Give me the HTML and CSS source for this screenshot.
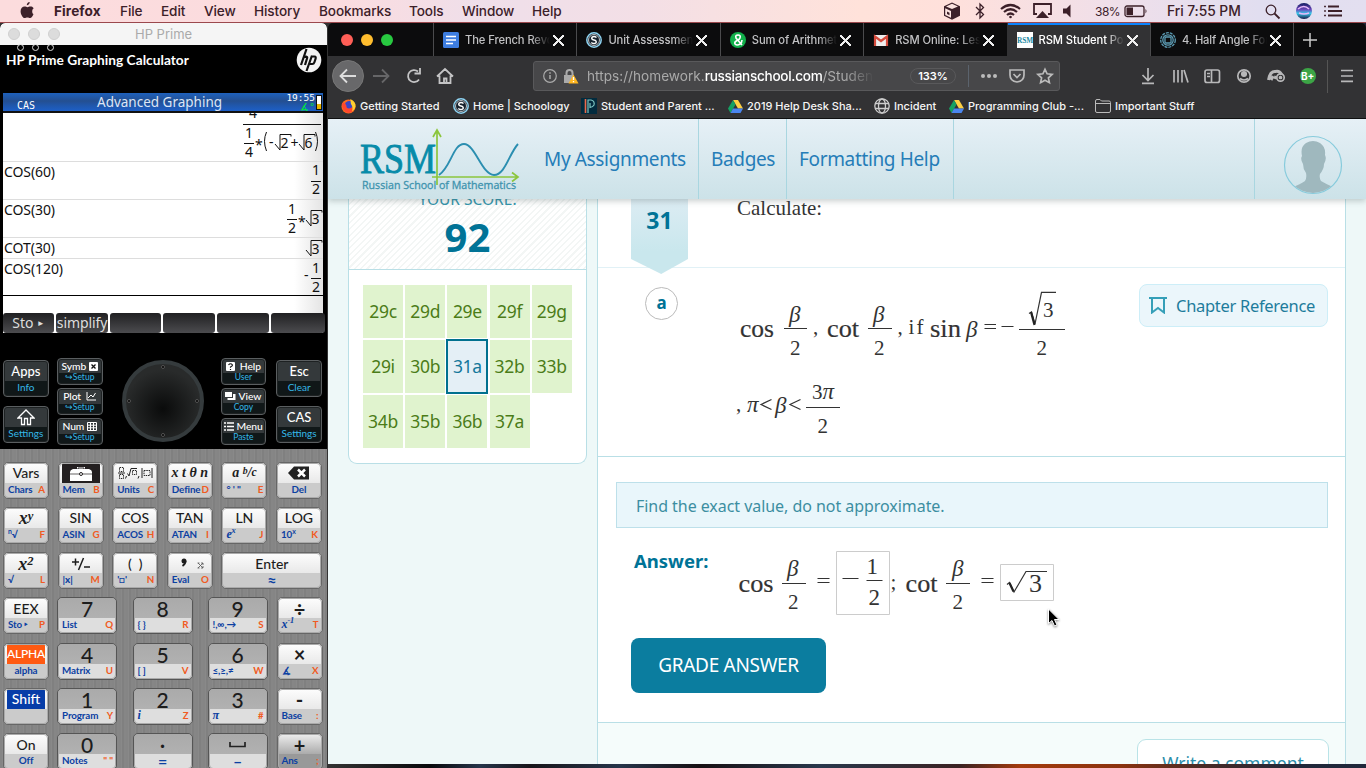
FILE: index.html
```html
<!DOCTYPE html>
<html lang="en">
<head>
<meta charset="utf-8">
<title>RSM Student Portal</title>
<link rel="stylesheet" href="styles.css">
</head>
<body>
<div class="desktop">
<header class="menubar">
  <svg class="apple" width="14" height="17" viewBox="0 0 14 17"><path d="M9.7 0c.1 1.500-1.300 3.300-2.900 3.300C6.600 1.700 8.100.2 9.700 0zM12.200 9.200c0-1.500.8-2.400 1.500-2.900C12.800 5 11.600 4.600 10.500 4.600c-1.300 0-2.300.7-3 .7-.8 0-1.700-.7-2.800-.7C2.400 4.600.6 6.300.6 9.300c0 3.200 2.200 6.800 4 6.800 1 0 1.600-.7 2.800-.7s1.600.7 2.700.7c1.400 0 2.700-2 3.400-4-1-.4-1.300-1.500-1.300-2.900z"/></svg>
  <nav class="menus"><b>Firefox</b><span>File</span><span>Edit</span><span>View</span><span>History</span><span>Bookmarks</span><span>Tools</span><span>Window</span><span>Help</span></nav>
  <svg class="status" width="145" height="22" viewBox="0 0 145 22">
    <path class="ink" d="M9 2.500l8 3.800v9.400l-8 4-8-4V6.300z"/><path fill="#fbe3e0" d="M3 6.500L9 3.800l6 2.700-6 2.600zM2.200 8.300L8 11v6.800l-5.800-2.900z"/><path class="ink" d="M4 11.500l2.500 1.200v2.600L4 14z"/>
    <path class="line" d="M33 7l7.500 7.500L37 18V4l3.500 3.500L33 15"/>
    <path class="arc" d="M58 9q9.500-8 19 0M61 12q6.500-5.500 13 0M64 15q3.500-3 7 0"/><circle class="ink" cx="67.500" cy="17" r="1.300"/>
    <path class="line2" d="M94 14h-3V4h17v10h-3"/><path class="ink" d="M93 18l6.500-7 6.500 7z"/>
    <path class="ink" d="M120 8.500h3.500l4-4v13l-4-4H120z"/>
  </svg>
  <span class="pct">38%</span>
  <svg class="batt" width="24" height="14" viewBox="0 0 24 14"><rect x="1" y="2" width="19" height="10.500" rx="2" class="line"/><rect x="2.500" y="3.500" width="6.500" height="7.500" class="ink"/><path class="ink" d="M21.500 5q2 2.200 0 4.500z"/></svg>
  <span class="clock">Fri 7:55 PM</span>
  <svg class="right-icons" width="90" height="22" viewBox="0 0 90 22"><circle cx="7" cy="10" r="4.800" class="line"/><path class="line2" d="M10.500 13.500l5 5"/><defs><linearGradient id="siri" x2="0" y2="1"><stop offset="0" stop-color="#111c60"/><stop offset=".4" stop-color="#6a45b8"/><stop offset=".65" stop-color="#38c7e8"/><stop offset="1" stop-color="#151848"/></linearGradient></defs><circle cx="40" cy="11" r="8" fill="url(#siri)"/><path d="M34 9q6-5 11 0M35 13q5 2 10 0" stroke="#e7b8fa" fill="none" stroke-width="1.500"/><path class="line2" d="M64 6.500h11M64 11h14M64 15.500h14"/><path class="line2" stroke-dasharray="1.500 3" d="M61 5.700v13"/></svg>
</header>

<section class="calc">
  <div class="calc-title"><i></i><i></i><i></i><span>HP Prime</span></div>
  <div class="brand"><div class="ghost"><i></i><i></i><i></i></div><span>HP Prime Graphing Calculator</span>
    <svg width="26" height="26" viewBox="0 0 26 26"><circle cx="13" cy="13" r="12.300" fill="#f3f3f3"/><g fill="none" stroke="#111" stroke-width="2.200"><path d="M10.500 2L5 18M7.500 10.500q4.500-2 3.500 1L9 18M16 8.500L10.500 24M15.500 9.500h3q1.800 0 1 2.500l-1.200 3.500q-.5 1.500-2 1.500h-2.500"/></g></svg>
  </div>
  <div class="lcd">
    <div class="lcd-head"><span class="cas">CAS</span><span class="app">Advanced Graphing</span><div class="lcd-stat"><span>19:55</span><em>∡°</em></div><i class="cell"></i></div>
    <svg class="lcd-body" width="320" height="200" viewBox="3 113 320 200">
      <path d="M3 161.500h320M3 199.500h320M3 237.500h320M3 258.500h320" stroke="#ddd"/>
      <path d="M3 295.500h320" stroke="#000"/>
      <text x="249" y="118">4</text><path d="M243 124.500h78" class="ln"/>
      <text x="245" y="137.500">1</text><path d="M244 143.500h10" class="ln"/><text x="245" y="156.500">4</text>
      <text x="255" y="150">*</text><path class="ln" d="M266.500 132q-4 9 0 19M315.500 132q4 9 0 19"/><text x="269" y="147">-</text>
      <path class="rad" d="M275 144l5 6v-15.500h11v2M299 144l5 6v-15.500h11v2"/><text x="280.500" y="148">2</text><text x="290.500" y="147.500">+</text><text x="304.500" y="148">6</text>
      <text x="4" y="177" textLength="51">COS(60)</text><text x="4" y="215" textLength="51">COS(30)</text><text x="4" y="253" textLength="51">COT(30)</text><text x="4" y="274" textLength="59">COS(120)</text>
      <text x="312" y="175">1</text><path d="M311 181.500h10" class="ln"/><text x="312" y="194">2</text>
      <text x="288" y="214">1</text><path d="M287 219.500h10" class="ln"/><text x="288" y="233">2</text><text x="298" y="227">*</text><path class="rad" d="M306 220l5 6v-15.500h11v2M306 250l5 6v-15.500h11v2"/><text x="311.500" y="224">3</text><text x="311.500" y="254">3</text>
      <text x="304" y="280">-</text><text x="312" y="273">1</text><path d="M311 278.500h10" class="ln"/><text x="312" y="292">2</text>
    </svg>
    <div class="soft"><span>Sto <small>►</small></span><span>simplify</span><span></span><span></span><span></span><span></span></div>
  </div>
  <div class="nav-keys">
    <div class="col big"><div class="dk"><b>Apps</b><u>Info</u></div><div class="dk"><b><svg width="18" height="17" viewBox="0 0 18 17"><path d="M1 9l8-8 8 8h-3.500v6.500h-3V9.500h-3v6h-3V9z" fill="none" stroke="#fff" stroke-width="1.300"/></svg></b><u>Settings</u></div></div>
    <div class="col small"><div class="dk"><b>Symb <svg width="9" height="9" viewBox="0 0 9 9"><rect width="9" height="9" rx="1" fill="#fff"/><path d="M2.500 2.500l4 4m0-4l-4 4" stroke="#111" stroke-width="1.300"/></svg></b><u>↪Setup</u></div><div class="dk"><b>Plot &nbsp;<svg width="10" height="9" viewBox="0 0 10 9"><path d="M1 0v8h9M2 6l3-3 2 2 2.500-4" fill="none" stroke="#fff"/></svg></b><u>↪Setup</u></div><div class="dk"><b>Num <svg width="10" height="9" viewBox="0 0 10 9"><path d="M.5.500h9v8h-9zM.5 3.200h9M.5 5.800h9M3.500.5v8M6.500.5v8" fill="none" stroke="#fff"/></svg></b><u>↪Setup</u></div></div>
    <svg class="pad" width="84" height="84" viewBox="0 0 84 84"><defs><radialGradient id="pd" cy=".6"><stop offset="0" stop-color="#0a0b0b"/><stop offset="1" stop-color="#292b2b"/></radialGradient></defs><circle cx="42" cy="42" r="39" fill="url(#pd)" stroke="#353b3d" stroke-width="4"/><g fill="#000" stroke="#555"><circle cx="42" cy="8" r="1.500"/><circle cx="42" cy="76" r="1.500"/><circle cx="8" cy="42" r="1.500"/><circle cx="76" cy="42" r="1.500"/></g></svg>
    <div class="col small"><div class="dk"><b><svg width="9" height="9" viewBox="0 0 9 9"><rect width="9" height="9" rx="1" fill="#fff"/><path d="M2.500 3q2-2.500 4 0 0 1-2 2v.8M4.500 7v1" fill="none" stroke="#111" stroke-width="1.200"/></svg>&nbsp; Help</b><u>User</u></div><div class="dk"><b><svg width="11" height="9" viewBox="0 0 11 9"><path d="M0 0h7v5H0zM2.500 6H8V2h2.500v6h-8z" fill="#fff"/></svg> View</b><u>Copy</u></div><div class="dk"><b><svg width="10" height="9" viewBox="0 0 10 9"><path d="M0 1h2m1 0h7M0 4.500h2m1 0h7M0 8h2m1 0h7" stroke="#fff" stroke-width="1.500"/></svg> Menu</b><u>Paste</u></div></div>
    <div class="col big"><div class="dk"><b>Esc</b><u>Clear</u></div><div class="dk"><b>CAS</b><u>Settings</u></div></div>
  </div>
  <div class="keypad">
    <div class="row six">
      <div class="key"><b>Vars</b><u>Chars<em>A</em></u></div>
      <div class="key mem"><b><svg width="42" height="16" viewBox="0 0 42 16"><path d="M10 16V7q0-2 3-3h4V2h8v2h4q3 1 3 3v9z" fill="#fff"/><path d="M10 9h22" stroke="#231f20" stroke-width=".7"/><path d="M18 4V3h6v1" stroke="#231f20" fill="none"/><circle cx="21" cy="9" r="1.500" stroke="#231f20" fill="#fff"/></svg></b><u>Mem<em>B</em></u></div>
      <div class="key"><b><svg width="36" height="14" viewBox="0 0 36 14"><g fill="none" stroke="#222" stroke-width="1"><path d="M2.500 1.500h4v4h-4zM2.500 8.500h4v4h-4z" stroke-dasharray="1.500 .8"/><path d="M1 7h7M9.500 10l-1 2.500M10.500 7.500l1.500 2.500 2-7.500h6M22 10l-1 2.500M25 2v10M35 2v10"/><path d="M15.500 4.500h4v4h-4zM27 4.500h6v5h-6z" stroke-dasharray="1.500 .8"/></g></svg></b><u>Units<em>C</em></u></div>
      <div class="key"><b class="var">x t θ n</b><u>Define<em>D</em></u></div>
      <div class="key"><b class="var">a <sup>b</sup>/<small>c</small></b><u class="deg">° ' "<em>E</em></u></div>
      <div class="key"><b><svg width="22" height="14" viewBox="0 0 22 14"><path d="M0 7l6-6.500h15v13H6z" fill="#222"/><path d="M10 3.500l7 7m0-7l-7 7" stroke="#fff" stroke-width="2.500"/></svg></b><u class="mid">Del</u></div>
    </div>
    <div class="row six">
      <div class="key"><b class="var xl">x<sup>y</sup></b><u><sup>n</sup>√<em>F</em></u></div><div class="key"><b>SIN</b><u>ASIN<em>G</em></u></div><div class="key"><b>COS</b><u>ACOS<em>H</em></u></div><div class="key"><b>TAN</b><u>ATAN<em>I</em></u></div><div class="key"><b>LN</b><u class="it">e<sup>x</sup><em>J</em></u></div><div class="key"><b>LOG</b><u>10<sup>x</sup><em>K</em></u></div>
    </div>
    <div class="row enter">
      <div class="key"><b class="var xl">x<sup>2</sup></b><u>√<em>L</em></u></div><div class="key"><b><svg width="20" height="14" viewBox="0 0 20 14"><path d="M1 5h7M4.500 1.500v7M12.500 1l-5 12M13 10h6" fill="none" stroke="#1d1d1d" stroke-width="1.500"/></svg></b><u>|<strong>x</strong>|<em>M</em></u></div><div class="key"><b>(&nbsp; )</b><u>'□'<em>N</em></u></div><div class="key"><b class="comma"><svg width="30" height="14" viewBox="0 0 30 14"><circle cx="9" cy="4" r="2.500" fill="#1d1d1d"/><path d="M10.500 4q0 3-3 5" fill="none" stroke="#1d1d1d" stroke-width="1.800"/><path d="M23 6l5 5m0-5l-5 5m3-5h2v2m0 1v2h-2M22.500 6h2M22.500 11h2" fill="none" stroke="#555" stroke-width=".8"/></svg></b><u>Eval<em>O</em></u></div><div class="key"><b>Enter</b><u class="mid approx">≈</u></div>
    </div>
    <div class="row five"><div class="key"><b>EEX</b><u>Sto ‣<em>P</em></u></div><div class="key num"><b>7</b><u>List<em>Q</em></u></div><div class="key num"><b>8</b><u>{ }<em>R</em></u></div><div class="key num"><b>9</b><u>!,∞,→<em>S</em></u></div><div class="key"><b class="op">÷</b><u class="it">x<sup>-1</sup><em>T</em></u></div></div>
    <div class="row five"><div class="key alpha"><b>ALPHA</b><u class="mid">alpha</u></div><div class="key num"><b>4</b><u>Matrix<em>U</em></u></div><div class="key num"><b>5</b><u>[ ]<em>V</em></u></div><div class="key num"><b>6</b><u>≤,≥,≠<em>W</em></u></div><div class="key"><b class="op">×</b><u>∡<em>X</em></u></div></div>
    <div class="row five"><div class="key shift"><b>Shift</b><u></u></div><div class="key num"><b>1</b><u>Program<em>Y</em></u></div><div class="key num"><b>2</b><u class="it">i<em>Z</em></u></div><div class="key num"><b>3</b><u class="it">π<em>#</em></u></div><div class="key"><b class="op">-</b><u>Base<em>:</em></u></div></div>
    <div class="row five"><div class="key"><b>On</b><u class="mid">Off</u></div><div class="key num"><b>0</b><u>Notes<em>" "</em></u></div><div class="key num"><b>·</b><u class="mid approx">=</u></div><div class="key num"><b><svg width="17" height="6" viewBox="0 0 17 6"><path d="M1 0v4.500h15V0" fill="none" stroke="#222" stroke-width="1.700"/></svg></b><u class="mid approx">–</u></div><div class="key plus"><b class="op">+</b><u>Ans<em>;</em></u></div></div>
  </div>
</section>

<section class="browser">
  <div class="tabs">
    <div class="lights"><i></i><i></i><i></i></div>
    <div class="tab"><svg width="16" height="16" viewBox="0 0 16 16"><rect width="16" height="16" rx="1.500" fill="#3d7de0"/><path d="M3 4.500h10M3 8h10M3 11.500h7" stroke="#fff" stroke-width="1.700"/></svg><span>The French Revolution</span><s></s></div>
    <div class="tab"><svg width="16" height="16" viewBox="0 0 16 16"><circle cx="8" cy="8" r="7.200" fill="#17222d" stroke="#8fd3f1" stroke-width="1.500"/><circle cx="8" cy="8" r="5.500" fill="none" stroke="#fff" stroke-width=".7"/><path d="M10.500 5.500Q8 3.500 6 5.300q-1 2 2 2.700 3 .8 2 2.700-2 1.800-4.700-.2" fill="none" stroke="#fff" stroke-width="1.500"/></svg><span>Unit Assessment - Gr</span><s></s></div>
    <div class="tab"><svg width="16" height="16" viewBox="0 0 16 16"><circle cx="8" cy="8" r="8" fill="#12b04b"/><path d="M12 13L6 6q-1-3 2-3t2 3q-.5 1.500-3 2.500-3 1.500-2 3.500 2 2 5 0 2-1.500 2-4" fill="none" stroke="#fff" stroke-width="1.600"/></svg><span>Sum of Arithmetic Seq</span><s></s></div>
    <div class="tab"><svg width="16" height="16" viewBox="0 0 16 16"><path d="M1 3h14v11H1z" fill="#eee"/><path d="M2 14V4.500L8 9l6-4.500V14" fill="none" stroke="#d54b3d" stroke-width="2.200"/></svg><span>RSM Online: Lesson 2</span><s></s></div>
    <div class="tab active"><svg width="16" height="16" viewBox="0 0 16 16"><rect width="16" height="16" fill="#fff"/><text x="0" y="11" textLength="16" lengthAdjust="spacingAndGlyphs" font-family="Liberation Serif" font-size="8.500" font-weight="bold" fill="#2089a3">RSM</text></svg><span>RSM Student Portal</span><s></s></div>
    <div class="tab"><svg width="16" height="16" viewBox="0 0 16 16" fill="none" stroke="#5b9ab2" stroke-width="1.300"><circle cx="8" cy="8" r="7.300" stroke-dasharray="3 1"/><circle cx="8" cy="8" r="5.200"/><rect x="5" y="5" width="6" height="6" rx="1"/></svg><span>4. Half Angle Formulas</span><s></s></div>
    <div class="newtab"><svg width="14" height="14" viewBox="0 0 14 14"><path d="M7 0v14M0 7h14" stroke="#ccc" stroke-width="1.500"/></svg></div>
  </div>
  <div class="toolbar">
    <svg class="nav-ic" width="130" height="34" viewBox="0 0 130 34" fill="none" stroke="#c4c4c5" stroke-width="1.800"><circle cx="17" cy="17" r="15.500" fill="#68686a" stroke="#777" stroke-width="1"/><path d="M25 17H10M16 10.500L9.500 17l6.500 6.500" stroke="#ddd"/><path d="M42 17h15M51 10.500l6.500 6.500-6.500 6.500" stroke="#666668"/><path d="M88 20.500a6 6 0 1 1-1-8M89 9v5.500h-5.500" /><path d="M106 17.500l8-7.500 8 7.500M108.500 16.500v7.500h11v-7.500M113 24v-4.500h2.500V24"/></svg>
    <div class="url">
      <svg width="38" height="20" viewBox="0 0 38 20"><circle cx="9" cy="10" r="6.300" fill="none" stroke="#aaa" stroke-width="1.200"/><path d="M9 9v4M9 6.300v1.500" stroke="#aaa" stroke-width="1.500"/><path d="M25.500 10V7q0-3 3-3t3 3v3" fill="none" stroke="#aaa" stroke-width="2"/><path fill="#aaa" d="M23 9h10v8H23z"/><path d="M32.500 8.500l5 9h-10z" fill="#ffb61e"/><path d="M32.500 11v3m0 1v1.300" stroke="#fff" stroke-width="1.300"/></svg>
      <span class="addr">https://homework.<b>russianschool.com</b>/Student/</span><span class="zoom">133%</span><hr>
      <svg width="75" height="20" viewBox="0 0 75 20" fill="none" stroke="#bbb" stroke-width="1.700"><g fill="#bbb" stroke="none"><circle cx="3" cy="10" r="2"/><circle cx="9" cy="10" r="2"/><circle cx="15" cy="10" r="2"/></g><path d="M30 4h14v5q0 6-7 7-7-1-7-7z"/><path d="M33.500 8l3.500 3.500L40.500 8"/><path d="M65 3.300l2.100 4.500 5 .6-3.700 3.400 1 4.900-4.400-2.500-4.400 2.500 1-4.900-3.700-3.400 5-.6z"/></svg>
    </div>
    <svg class="tools" width="225" height="34" viewBox="0 0 225 34" fill="none" stroke="#b8b8b9" stroke-width="1.700"><path d="M16 9v12M10.500 16l5.500 5.500 5.500-5.500M10 24.300h12"/><path d="M42 11v12.500M46 11v12.500M50 11v12.500M52 11l4 12.500" /><rect x="73" y="11" width="14.500" height="12.500" rx="2"/><path d="M79.500 11v12.500M75 14.500h3M75 17.500h3"/><circle cx="112" cy="17" r="6.200"/><circle cx="112" cy="15" r="2.200" fill="#b8b8b9"/><path d="M108 19.500q4 3 8 0"/><path d="M136.500 21l1-4q2-5 6-4.500 4-1 6 3M139 21l2-4M143 20l1-3" stroke-width="3"/><circle cx="148.500" cy="18.500" r="3.700"/><circle cx="148.500" cy="18.500" r="1" fill="#b8b8b9"/><circle cx="176" cy="17" r="8" fill="#3ca546" stroke="none"/><text x="169" y="20.500" fill="#fff" stroke="none" font-family="Inter" font-weight="bold" font-size="10">B+</text><path d="M195.500 1v33" stroke="#555" stroke-width="1"/><path d="M209 11.500h12M209 17h12M209 22.300h12"/></svg>
  </div>
  <div class="bookmarks">
    <span><svg width="15" height="15" viewBox="0 0 16 16"><circle cx="8" cy="8" r="7.500" fill="#ff6b1c"/><circle cx="9" cy="7" r="5" fill="#3b46c4"/><path d="M1 4q5 0 5 5 3 3 8-2 1 6-5 8-8 0-8-11z" fill="#ff472e"/><path d="M10 0q6 3 5.500 8-1 4-4 5 2-4-1-8z" fill="#ffcf2f"/></svg>Getting Started</span>
    <span><svg width="16" height="16" viewBox="0 0 16 16"><circle cx="8" cy="8" r="7.200" fill="#17222d" stroke="#8fd3f1" stroke-width="1.500"/><circle cx="8" cy="8" r="5.500" fill="none" stroke="#fff" stroke-width=".7"/><path d="M10.500 5.500Q8 3.500 6 5.300q-1 2 2 2.700 3 .8 2 2.700-2 1.800-4.700-.2" fill="none" stroke="#fff" stroke-width="1.500"/></svg>Home | Schoology</span>
    <span><svg width="16" height="16" viewBox="0 0 16 16"><rect width="16" height="16" fill="#022b3e"/><path d="M4.500 1v14" stroke="#e8684a" stroke-width="1.600"/><path d="M7 15V2h3q4 1 3 5-1 2-4 2.500V5" stroke="#7cc4c0" stroke-width="1.200" fill="none"/></svg>Student and Parent ...</span>
    <span><svg width="15" height="14" viewBox="0 0 15 14"><path d="M5 1h5l5 8.500h-5z" fill="#fdd043"/><path d="M5 1l2.500 4.500L2.500 14 0 9.500z" fill="#14a163"/><path d="M5 9.500h10L12.500 14h-10z" fill="#4a86f0"/></svg>2019 Help Desk Sha...</span>
    <span><svg width="16" height="16" viewBox="0 0 16 16" fill="none" stroke="#ccc" stroke-width="1.300"><circle cx="8" cy="8" r="7.200"/><ellipse cx="8" cy="8" rx="3.500" ry="7"/><path d="M1 5.500h14M1 10.500h14"/></svg>Incident</span>
    <span><svg width="15" height="14" viewBox="0 0 15 14"><path d="M5 1h5l5 8.500h-5z" fill="#fdd043"/><path d="M5 1l2.500 4.500L2.500 14 0 9.500z" fill="#14a163"/><path d="M5 9.500h10L12.500 14h-10z" fill="#4a86f0"/></svg>Programming Club -...</span>
    <span><svg width="16" height="14" viewBox="0 0 16 14" fill="none" stroke="#bbb"><path d="M.5 2q0-1.500 1.500-1.500h3L6.500 2H14q1.500 0 1.500 1.500v8.500q0 1.500-1.500 1.500H2Q.5 13.500.5 12zM.5 4.500h15"/></svg>Important Stuff</span>
  </div>
  <div class="page">
    <header class="site">
      <svg class="rsm" width="162" height="66" viewBox="0 0 162 66"><text x="1" y="44.500" textLength="76" lengthAdjust="spacingAndGlyphs" font-family="Liberation Serif" font-size="43" fill="#078ba9" stroke="#078ba9" stroke-width=".9">RSM</text><g fill="none" stroke="#8cc63e" stroke-width="1.700"><path d="M78 4v53M74 9l4-7 4 7M73 49h85M153 44.500l6 4.500-6 4.500"/></g><path d="M80 47c12-8 14-31 25-31s18 31 30 31c11 0 15-21 24-31" fill="none" stroke="#2b8eb0" stroke-width="1.900"/><text x="3" y="61" textLength="154" lengthAdjust="spacingAndGlyphs" font-family="Open Sans" font-size="10.800" fill="#3e93ae" stroke="#3e93ae" stroke-width=".3">Russian School of Mathematics</text></svg>
      <nav><a>My Assignments</a><a>Badges</a><a>Formatting Help</a></nav>
      <div class="avatar"><svg width="60" height="60" viewBox="0 0 60 60"><defs><clipPath id="av"><circle cx="30" cy="30" r="28"/></clipPath></defs><path clip-path="url(#av)" fill="#9fb8be" d="M8 53q10-4 14-7 2-3 1-8-3-4-3-9-3-5-1-8-2-9 4-13 7-4 14 0 6 4 5 12 2 4-1 9 0 5-4 10-1 4 1 7 5 3 14 7v7H8z"/><circle cx="30" cy="30" r="28.500" fill="none" stroke="#87cbdc" stroke-width="1.200"/></svg></div>
    </header>
    <main>
      <aside class="score-card">
        <div class="score"><span>YOUR SCORE:</span><strong>92</strong></div>
        <div class="cells"><a>29c</a><a>29d</a><a>29e</a><a>29f</a><a>29g</a><a>29i</a><a>30b</a><a class="current">31a</a><a>32b</a><a>33b</a><a>34b</a><a>35b</a><a>36b</a><a>37a</a></div>
      </aside>
      <article class="problem">
        <div class="prompt"><div class="ribbon">31</div><p>Calculate:</p></div>
        <div class="question">
          <div class="part">a</div>
          <svg class="math" width="340" height="160" viewBox="732 284 340 160">
            <g class="fn"><text x="740" y="337" textLength="34" lengthAdjust="spacingAndGlyphs">cos</text><text x="827" y="337" textLength="32" lengthAdjust="spacingAndGlyphs">cot</text><text x="930" y="337" textLength="31" lengthAdjust="spacingAndGlyphs">sin</text></g>
            <g class="bt"><text x="789" y="322">β</text><text x="873" y="322">β</text><text x="966" y="337">β</text><text x="747" y="412">π</text><text x="775" y="413">β</text><text x="822.500" y="399">π</text></g>
            <g class="sm"><text x="790" y="355">2</text><text x="874" y="355">2</text><text x="813" y="334">,</text><text x="897.500" y="334">,</text><text x="908.500" y="334" textLength="15">if</text><text x="1043" y="317">3</text><text x="1036.500" y="355">2</text><text x="736" y="411">,</text><text x="812" y="399">3</text><text x="817.500" y="433">2</text></g>
            <path class="bar" d="M784 328.500h23M868 328.500h24M1019 329.500h46M806 407.500h34M984.500 324.500h11.500M984.500 328.500h11.500M1001.500 326.500h12"/>
            <path class="stroke" d="M771.500 399.500l-10.500 5 10.500 5M800.500 399.500l-10.500 5 10.500 5"/>
            <path class="root" d="M1029 313.500l2.500-1.500 3.500 12 6.500-31.700h14.500"/><path d="M1031 312l3.500 13" class="heavy"/>
          </svg>
          <button class="chapter"><svg width="18" height="17" viewBox="0 0 18 17"><path d="M0 1h18M3 1v14.500l6-4.500 6 4.500V1" fill="none" stroke="#359fb8" stroke-width="2"/></svg>Chapter Reference</button>
        </div>
        <div class="answer">
          <div class="hint">Find the exact value, do not approximate.</div>
          <div class="line-answer"><strong>Answer:</strong>
            <svg class="math" width="340" height="76" viewBox="732 545 340 76">
              <g class="fn"><text x="738.500" y="592" textLength="35" lengthAdjust="spacingAndGlyphs">cos</text><text x="905.500" y="592" textLength="32" lengthAdjust="spacingAndGlyphs">cot</text></g>
              <g class="bt"><text x="787" y="576">β</text><text x="952" y="576">β</text></g>
              <g class="sm"><text x="788" y="609">2</text><text x="952.500" y="609">2</text><text x="890.500" y="589">;</text><text x="866.500" y="574" class="st">1</text><text x="868.500" y="605" class="st">2</text><text x="1029" y="592" class="st big3">3</text></g>
              <path class="bar" d="M782 583.500h24M946 583.500h24M817.500 578.500h12M817.500 582.500h12M981.500 578.500h12M981.500 582.500h12M842.500 578.500h16M866.500 580.500h16"/>
              <path fill="none" stroke="#ccc" d="M836.500 551.500h53v63h-53zM1000.500 564.500h53v36h-53z"/>
              <path class="root" d="M1007 584.500l2.500-2 4.500 9.500 12-20.500h21"/><path d="M1009.500 583l4 8.500" class="heavy"/>
            </svg></div>
          <button class="grade">GRADE ANSWER</button>
        </div>
        <footer><button>Write a comment</button></footer>
      </article>
    </main>
  </div>
</section>
<svg class="cursor" width="14" height="20" viewBox="0 0 14 20"><path d="M1.500 1v14.500l3.500-3 2.500 5.500 2.500-1-2.500-5.500h4.500z" fill="#000" stroke="#fff"/></svg>
</div>
</body>
</html>
```
FILE: styles.css
```css
* { box-sizing: border-box; }
body { margin: 0; overflow: hidden; font-family: Inter, "Noto Sans", sans-serif; }
svg { flex: none; display: block; }
button { font: inherit; }
.desktop { position: relative; width: 1366px; height: 768px; overflow: hidden; background: linear-gradient(90deg, #333 0 328px, #09090c 430px, #26354a 480px, #17151a 530px, #26354a 620px, #171013 700px, #29384c 820px, #3b2222 960px, #a33b0d 1020px, #8b330f 1120px, #4b2a25 1200px, #21283a 1300px, #20283b); }

.menubar { position: absolute; z-index: 5; inset: 0 0 auto; height: 23px; display: flex; align-items: center; font-size: 14px; color: #3c2029; background: linear-gradient(90deg, #fcdcdd 0, #fbdcdf 340px, #efdfea 480px, #f3dfe6 640px, #ffe2da 860px, #ffe0db 950px, #efdfea 1120px, #e1def0 1260px, #e3dff0); border-bottom: 1px solid #9b484d; }
.apple { margin-left: 20px; fill: #3c2029; margin-top: -2px; }
.menus { display: flex; margin-left: 20px; font-weight: 500; font-size: 13.6px; letter-spacing: -.1px; }
.menus > * { width: 41px; }
.menus b { width: 66px; font-weight: 700; letter-spacing: .1px; }
.menus :nth-child(3) { width: 43px; } .menus :nth-child(4) { width: 50px; } .menus :nth-child(5) { width: 65px; } .menus :nth-child(6) { width: 90px; } .menus :nth-child(7) { width: 53px; } .menus :nth-child(8) { width: 70px; }
.ink { fill: #3c2029; } .line, .line2, .arc { fill: none; stroke: #3c2029; stroke-width: 1.3; } .line2 { stroke-width: 1.8; } .arc { stroke-width: 2.2; }
.status { margin-left: 370px; }
.pct { width: 27px; margin-left: 7px; font-size: 12px; letter-spacing: -.5px; white-space: nowrap; }
.batt { margin-left: 2px; }
.clock { margin-left: 19px; width: 78px; font-size: 13.8px; letter-spacing: -.05px; font-weight: 500; white-space: nowrap; }
.right-icons { margin-left: 19px; }

.calc { position: absolute; left: 0; top: 23px; width: 327px; height: 745px; overflow: hidden; background: #000; border-radius: 5px 5px 0 0; }
.calc-title { height: 22px; background: #f5f5f5; display: flex; align-items: center; padding-left: 8px; gap: 8px; border-radius: 5px 5px 0 0; }
.calc-title i { width: 12px; height: 12px; border-radius: 50%; background: #dcdcdc; border: 1px solid #cfcfcf; }
.calc-title span { margin-left: 67px; font-size: 13px; color: #aaa; }
.brand { height: 48px; display: flex; align-items: flex-start; color: #fff; padding: 0 5px 0 6px; justify-content: space-between; position: relative; }
.brand > span { font: bold 13.7px Lato, sans-serif; padding-top: 6px; white-space: nowrap; letter-spacing: .03px; }
.brand > svg { margin-top: 2px; }
.ghost { position: absolute; left: 17px; top: -1px; height: 7px; overflow: hidden; display: flex; gap: 8px; }
.ghost i { width: 7px; height: 7px; border: 1px solid #ddd; border-radius: 50%; }
.lcd { width: 320px; margin-left: 3px; height: 240px; }
.lcd-head { height: 20px; display: flex; background: linear-gradient(#1e61bd, #244f91 40%, #2056a9 60%, #1d5fc7 90%, #111 92%); color: #fff; font: 13.5px "Noto Sans", sans-serif; }
.cas { width: 94px; padding: 7px 0 0 14px; font: 10px "DejaVu Sans Mono", monospace; }
.app { width: 187px; color: #dce6f6; line-height: 18px; white-space: nowrap; }
.lcd-stat { width: 31px; font: 9.500px/10px "DejaVu Sans Mono", monospace; display: flex; flex-direction: column; align-items: flex-end; }
.lcd-stat em { color: #0e3; line-height: 8px; font-style: normal; }
.cell { width: 6px; height: 15px; margin: 2px 0 0 1px; border: 1px solid #111; background: linear-gradient(#fff 60%, #e5b300 60%); }
.lcd-body { background: linear-gradient(90deg, #fff 91%, #e4e4e4); font: 14px "Noto Sans", sans-serif; fill: #111; }
.ln, .rad { fill: none; stroke: #111; }
.soft { display: grid; grid-template-columns: 51px 52px 51px 52px 52px 54px; gap: 0 2px; height: 20px; background: #fff; }
.soft span { background: linear-gradient(#202022, #4c4c4f); border-radius: 3px; color: #ddd; font: 14px/20px "Noto Sans", sans-serif; text-align: center; white-space: nowrap; overflow: hidden; letter-spacing: -.1px; }
.soft small { font-size: 8px; vertical-align: 2px; }
.nav-keys { height: 116px; padding: 25px 5px 0 3px; display: flex; }
.nav-keys .big { width: 46px; display: flex; flex-direction: column; gap: 9px; margin-top: 2px; }
.nav-keys .small { width: 46px; margin-left: 8px; display: flex; flex-direction: column; gap: 3.500px; }
.pad { margin: 1px 0 0 18px; }
.pad + .small { margin-left: 16px; }
.pad ~ .big { margin-left: 10px; }
.dk { border: 1px solid #5a5e60; border-radius: 4px; height: 37px; background: linear-gradient(#34393b 58%, #101718 58%); box-shadow: inset 0 0 0 1px #1d2122; color: #fff; display: flex; flex-direction: column; text-align: center; font-family: Lato, sans-serif; }
.dk b { height: 21px; font-weight: 500; font-size: 13px; line-height: 19px; display: flex; justify-content: center; align-items: center; }
.dk u { text-decoration: none; color: #35b7e8; font-size: 10px; line-height: 11px; }
.small .dk { height: 26.500px; }
.small .dk b { height: 14px; font-size: 10.300px; line-height: 14px; white-space: pre; letter-spacing: -.1px; }
.small .dk u { font-size: 8.500px; line-height: 9px; }
.keypad { height: 323px; padding: 12.500px 5px 0 3px; background: repeating-linear-gradient(90deg, #858585 0 2px, #898989 2px 3px, #808080 3px 5px, #868686 5px 7px); display: flex; flex-direction: column; gap: 8.300px; font-family: Lato, sans-serif; }
.row { display: grid; height: 37px; flex: none; }
.six { grid-template-columns: repeat(6, 46px); column-gap: 8.600px; }
.enter { grid-template-columns: repeat(4, 46px) 101px; column-gap: 8.600px; }
.five { grid-template-columns: 54px 75.5px 75px 69px 46px; }
.five .key { width: 46px; }
.five .num { width: 60px; }
.key { border: 1px solid #666; outline: 1px solid #aaa; outline-offset: -2px; border-radius: 5px; background: linear-gradient(#fdfdfd, #e9e9e9 56%, #cbcbcb 56%); display: flex; flex-direction: column; padding: 1px 3px; min-width: 0; }
.key b { height: 19px; font-size: 14px; line-height: 18px; font-weight: 500; color: #1d1d1d; display: flex; justify-content: center; align-items: center; white-space: pre; }
.key u { text-decoration: none; color: #0b40a2; font-size: 9.800px; line-height: 13px; height: 13px; font-weight: 700; white-space: nowrap; padding-left: 1px; letter-spacing: -.1px; display: flex; align-items: center; }
.key em { margin-left: auto; font-style: normal; color: #f15a22; }
.key sup { font-size: 70%; line-height: 0; vertical-align: 4px; align-self: flex-start; margin-top: 7px; }
.key u sup { margin: 3px 0 0; }
.key .var { font: italic bold 14px/18px "Liberation Serif", serif; }
.key .xl { font-size: 18px; }
.key .it { font-family: "Liberation Serif", serif; font-style: italic; font-size: 12px; }
.key .it em { font: bold 9.600px/13px Lato, sans-serif; }
.key .mid { justify-content: center; padding: 0; }
.key .approx { font-size: 16px; }
.key .op { font-size: 20px; font-weight: 700; }
.num { background: linear-gradient(#aaa, #b1b1b1 56%, #dedede 56%); border-color: #555; }
.num b { font-size: 21px; line-height: 17px; }
.mem b { background: #231f20; }
.alpha b { background: #ff5a12; color: #fff; font-size: 12px; letter-spacing: -.2px; }
.shift b { background: #073da8; color: #fff; }
.plus { background: linear-gradient(#eee, #aaa 58%, #999 58%); }

.browser { position: absolute; left: 328px; top: 23px; width: 1038px; height: 741px; overflow: hidden; background: #323234; border-radius: 5px 5px 0 0; }
.tabs { display: flex; height: 33px; background: #0c0c0d; color: #c2c2c4; }
.lights { width: 105px; display: flex; gap: 8px; padding: 11px 0 0 13px; }
.lights i { width: 12px; height: 12px; border-radius: 50%; background: #ff5f57; } .lights i:nth-child(2) { background: #ffbd2e; } .lights i:nth-child(3) { background: #28c940; }
.tab { width: 143.4px; border-left: 1px solid #4b4b4d; display: flex; align-items: center; padding: 1px 11px 0 9px; font-size: 11.2px; letter-spacing: -.1px; font-weight: 500; }
.tab span { margin-left: 6px; width: 85px; overflow: hidden; white-space: nowrap; -webkit-mask: linear-gradient(90deg, #000 78%, transparent); mask: linear-gradient(90deg, #000 78%, transparent); }
.tab s { width: 11px; height: 11px; margin-left: 3px; background: linear-gradient(45deg, transparent 44%, #eee 44% 57%, transparent 57%), linear-gradient(-45deg, transparent 44%, #eee 44% 57%, transparent 57%); }
.tab.active { background: #323234; color: #fff; border-left-color: #323234; box-shadow: inset 0 2px #0a84ff; }
.newtab { border-left: 1px solid #4b4b4d; padding: 10px 9px; }
.toolbar { height: 37px; display: flex; align-items: center; padding-top: 3px; }
.nav-ic { margin-left: 3px; }
.url { margin-left: 72px; width: 527px; height: 30px; border: 1px solid #59595b; border-radius: 3px; background: #474749; display: flex; align-items: center; color: #aaa; font-size: 13.6px; padding-left: 7px; }
.addr { width: 287px; margin-left: 8px; white-space: nowrap; overflow: hidden; letter-spacing: .02px; -webkit-mask: linear-gradient(90deg, #000 90%, transparent); mask: linear-gradient(90deg, #000 90%, transparent); }
.addr b { color: #fff; font-weight: 500; letter-spacing: -.3px; }
.zoom { margin-left: 36px; width: 46px; height: 16px; border: 1px solid #59595b; border-radius: 9px; font: 600 11px/14px Inter, sans-serif; color: #fff; text-align: center; }
.url hr { width: 1px; height: 22px; border: 0; background: #5b636d; margin: 0 11px 0 12px; }
.tools { margin-left: 72px; }
.bookmarks { height: 26px; display: flex; padding: 1px 0 0 13px; color: #f5f5f5; font-size: 11px; font-weight: 500; border-bottom: 1px solid #0c0c0d; }
.bookmarks span { display: flex; align-items: center; gap: 4px; white-space: nowrap; width: 112px; }
.bookmarks span:nth-child(2) { width: 128px; } .bookmarks span:nth-child(3) { width: 147px; } .bookmarks span:nth-child(4) { width: 146px; } .bookmarks span:nth-child(5) { width: 75px; } .bookmarks span:nth-child(6) { width: 146px; } .bookmarks span:nth-child(7) { width: 130px; }

.page { height: 645px; background: #eef8f8; font-family: "Noto Sans", "Open Sans", sans-serif; color: #078; }
.site { position: relative; z-index: 2; height: 80px; display: flex; background: linear-gradient(#e6f0f6, #cce2e8); box-shadow: 0 2px 6px rgba(70, 90, 90, .3); }
.rsm { margin: 9px 0 0 31px; }
.site nav { display: flex; margin-left: 11px; }
.site a { border-right: 1px solid #a9d6e0; padding: 26px 0 0 12px; font-size: 19px; line-height: 28px; color: #257db8; white-space: nowrap; letter-spacing: -.35px; }
.site a:nth-child(1) { width: 167px; } .site a:nth-child(2) { width: 88px; } .site a:nth-child(3) { width: 167px; }
.avatar { margin-left: auto; width: 112px; border-left: 1px solid #a9d6e0; padding: 16px 0 0 28px; }
main { display: flex; height: 565px; }
.score-card { width: 239px; height: 265px; margin-left: 20px; border: 1px solid #b9dfe6; border-top: 0; border-radius: 0 0 9px 9px; background: #fff; }
.score { height: 71px; border-bottom: 1px solid #b9dfe6; background: repeating-linear-gradient(135deg, #fff 0 3px, #f3f6f5 3px 4.500px); display: flex; flex-direction: column; align-items: center; }
.score span { font-size: 15.5px; line-height: 20px; margin-top: -10px; color: #3495ac; }
.score strong { font-size: 40px; line-height: 56px; color: #007396; }
.cells { display: grid; grid-template-columns: repeat(5, 40px); grid-auto-rows: 53px; gap: 2px 2.200px; padding: 15px 14px; }
.cells a { background: #e0f3ce; color: #4b7c18; font-size: 17.5px; letter-spacing: -.3px; line-height: 53px; text-align: center; }
.cells .current { background: #e4eff6; color: #13779b; box-shadow: 0 0 0 1px #00708f, inset 0 0 0 1px #00708f; }
.problem { width: 749px; margin-left: 10px; border: solid #b9dfe6; border-width: 0 1px; background: #fff; display: flex; flex-direction: column; }
.prompt { height: 69px; border-bottom: 1px solid #e1f1f6; display: flex; position: relative; z-index: 1; flex: none; }
.ribbon { width: 57px; height: 75px; margin-left: 33px; clip-path: polygon(0 0, 100% 0, 100% 80%, 53% 100%, 0 80%); background: linear-gradient(#dcecf3, #c9e7ed 70%); font-size: 23px; font-weight: 700; line-height: 42px; text-align: center; color: #007396; }
.prompt p { margin: 0 0 0 49px; font: 21px/18px "Liberation Serif", serif; color: #333; }
.question { height: 189px; border-bottom: 1px solid #b9dfe6; display: flex; flex: none; }
.part { width: 33px; height: 33px; margin: 19px 0 0 47px; border: 1px solid #bbb; border-radius: 50%; text-align: center; line-height: 29px; font-size: 17px; font-weight: 700; color: #007396; flex: none; }
.question .math { margin: 16px 0 0 54px; }
.math { font-family: "Liberation Serif", serif; fill: #333; }
.fn { font-size: 26px; stroke: #333; stroke-width: .2; } .bt { font-size: 23px; font-style: italic; } .sm { font-size: 21px; } .st { font-size: 23px; } .big3 { font-size: 26px; }
.bar { stroke: #333; fill: none; } .stroke, .root { fill: none; stroke: #333; stroke-width: 1.200; } .heavy { stroke: #222; stroke-width: 2.200; fill: none; }
.chapter { margin: 16px 0 0 67px; width: 189px; height: 43px; border: 1px solid #cdeef8; border-radius: 8px; background: #ebf6fb; color: #1d7c9c; font-size: 16.5px; letter-spacing: -.3px; padding: 0 0 0 9px; display: flex; align-items: center; gap: 9px; white-space: nowrap; }
.answer { height: 266px; padding: 25px 17px 0 18px; border-bottom: 1px solid #b9dfe6; flex: none; }
.hint { height: 46px; border: 1px solid #bde0ea; background: #e9f6fb; padding-left: 19px; line-height: 46px; font-size: 16px; letter-spacing: -.05px; color: #3c8ea1; }
.line-answer { display: flex; margin-top: 17px; height: 76px; }
.line-answer strong { width: 98px; padding-left: 18px; font-size: 18.500px; line-height: 31px; color: #007396; white-space: nowrap; }
.line-answer .math { margin-left: 18px; }
.grade { margin: 17px 0 0 15px; width: 195px; height: 55px; border: 0; border-radius: 8px; background: #0b7d9f; color: #fff; font-size: 19px; letter-spacing: -.3px; padding: 0 0 2px; }
footer { flex: 1; background: #f5fcfb; padding: 16px 16px 0; overflow: hidden; }
footer button { display: block; margin-left: auto; width: 192px; height: 54px; border: 1px solid #b9e3e7; border-radius: 9px; background: #fff; color: #2c8eab; font-size: 17.5px; padding: 0 0 6px; }
.cursor { position: absolute; left: 1047px; top: 608px; filter: drop-shadow(0 1px 1px #888); }
```
